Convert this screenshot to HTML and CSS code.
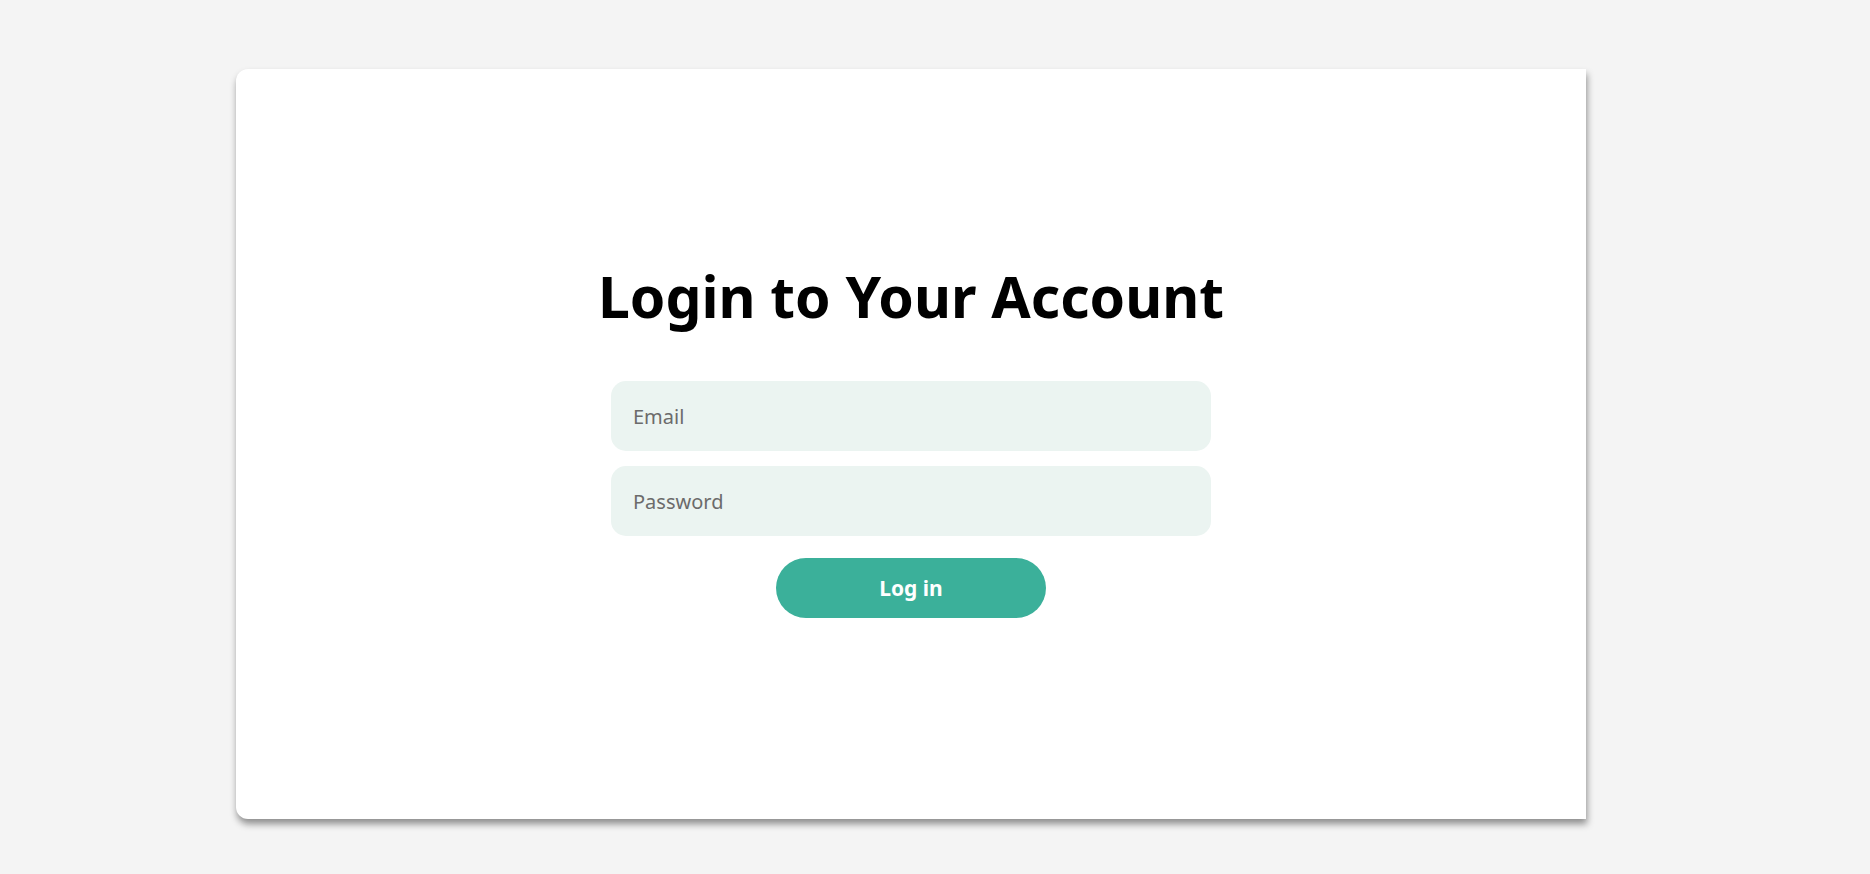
FILE: index.html
```html
<!DOCTYPE html>
<html lang="en">
<head>
    <meta charset="UTF-8">
    <meta name="viewport" content="width=device-width, initial-scale=1.0">
    <title>Login</title>
    <link rel="stylesheet" href="styles.css">
</head>
<body>
    <div class="page">
        <div class="card">
            <div class="login-panel">
                <h1 class="login-title">Login to Your Account</h1>
                <form id="loginForm" class="login-form">
                    <input type="email" class="login-input" placeholder="Email">
                    <input type="password" class="login-input" placeholder="Password">
                </form>
                <button type="submit" form="loginForm" class="login-button">Log in</button>
            </div>
        </div>
    </div>
</body>
</html>
```

FILE: styles.css
```css
body {
    margin: 0;
    background-color: #f4f4f4;
    font-family: "Noto Sans", "Open Sans", sans-serif;
}

.page {
    min-height: 100vh;
    box-sizing: border-box;
    padding: 69px 0 0 236px;
}

/* 왼쪽만 둥근 카드 */
.card {
    width: 1350px;
    height: 750px;
    background-color: #ffffff;
    border-radius: 12px 0 0 12px;
    box-shadow: 1px 5px 7px rgba(0, 0, 0, 0.42);
}

.login-panel {
    display: flex;
    flex-direction: column;
    align-items: center;
    padding-top: 192px;
}

.login-title {
    margin: 0 0 50px 0;
    font-size: 57px;
    font-weight: 700;
    line-height: 70px;
    color: #000000;
    white-space: nowrap;
}

.login-form {
    display: flex;
    flex-direction: column;
    gap: 15px;
}

.login-input {
    width: 600px;
    height: 70px;
    box-sizing: border-box;
    padding: 0 22px;
    border: none;
    border-radius: 15px;
    background-color: #ebf4f1;
    font-family: inherit;
    font-size: 20px;
    color: #333333;
    outline: none;
}

.login-input::placeholder {
    color: #6b6b6b;
}

.login-button {
    width: 270px;
    height: 60px;
    margin-top: 22px;
    border: none;
    border-radius: 30px;
    background-color: #3bb09a;
    color: #ffffff;
    font-family: inherit;
    font-size: 21px;
    font-weight: 700;
    cursor: pointer;
}
```
